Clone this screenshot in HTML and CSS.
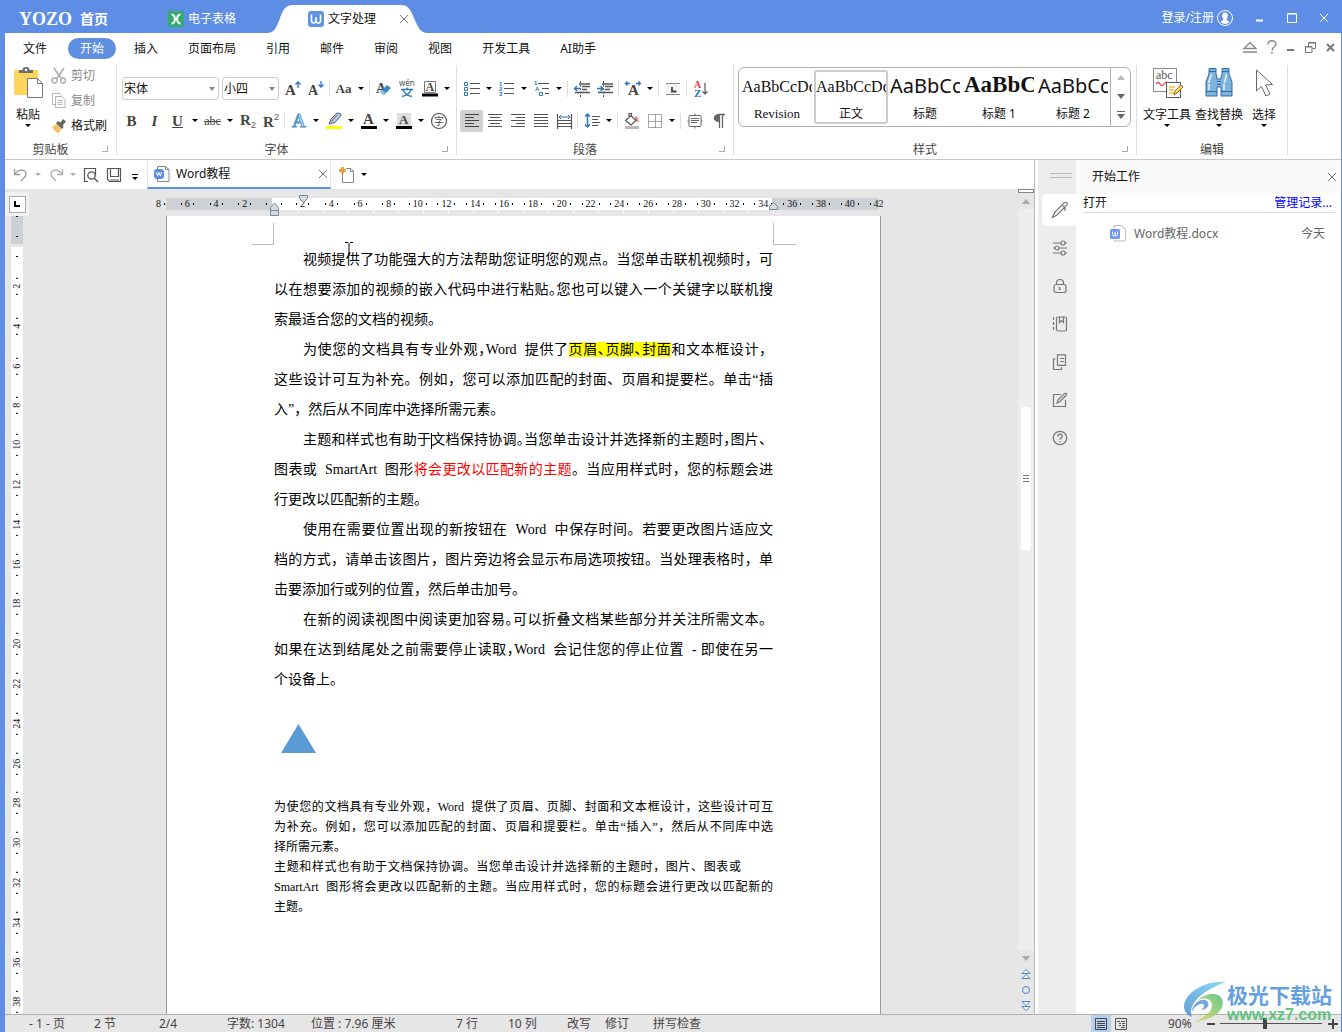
FILE: index.html
```html
<!DOCTYPE html>
<html lang="zh-CN">
<head>
<meta charset="utf-8">
<title>Word教程 - 文字处理</title>
<link rel="stylesheet" href="styles.css">
</head>
<body>
<header class="titlebar">
  <button class="home"><span class="brand">YOZO</span><span>首页</span></button>
  <button class="app-tab">
    <svg width="16" height="16"><rect width="16" height="16" rx="2" fill="#33ab6b"/><path d="M3.500 3.500C8 4 8 12 3.500 12.500M12.500 3.500C8 4 8 12 12.500 12.500M6.500 8h3" fill="none" stroke="#fff" stroke-width="2"/></svg>
    <span>电子表格</span>
  </button>
  <div class="app-tab current">
    <svg class="tab-shape" width="161" height="28" viewBox="0 0 161 28"><path d="M0 28C7 28 9 23 12 16C15 7 17 0 26 0H134C142 0 144 6 147 13C151 22 153 28 161 28Z" fill="#fff"/></svg>
    <svg width="16" height="16"><rect width="16" height="16" rx="3" fill="#5e93e3"/><path d="M3.500 3.500v6q0 2.500 2.200 2.500T8 9.500V6v3.500q0 2.500 2.300 2.500t2.200-2.500v-6" fill="none" stroke="#fff" stroke-width="1.600"/></svg>
    <span>文字处理</span>
    <button class="tab-close" aria-label="关闭"><svg width="10" height="10"><path d="M1 1l8 8M9 1l-8 8" stroke="#777"/></svg></button>
  </div>
  <div class="window-tools">
    <button class="login"><span>登录/注册</span><svg width="16" height="16"><circle cx="8" cy="8" r="7.500" fill="none" stroke="#fff"/><path d="M8 2.500c-2 0-3 1.500-2.800 3.500.1 1.500.8 2.300 1.300 3-.2 1.500-2 2-3 2.800C4.500 13.500 6.500 14 8 14s3.500-.5 4.500-2.200c-1-.8-2.800-1.300-3-2.800.5-.7 1.200-1.500 1.300-3C11 4 10 2.500 8 2.500z" fill="#fff"/></svg></button>
    <button aria-label="最小化"><svg width="10" height="10"><path d="M1 7.500h7" stroke="#fff" stroke-width="2"/></svg></button>
    <button aria-label="最大化"><svg width="10" height="10"><path d="M.5 .5h9v9h-9zM0 1h10" fill="none" stroke="#fff"/></svg></button>
    <button aria-label="关闭窗口"><svg width="10" height="10"><path d="M1 1l8 8M9 1l-8 8" stroke="#fff"/></svg></button>
  </div>
</header>

<div class="frame">
<nav class="menu">
  <button class="file">文件</button><button class="on">开始</button><button>插入</button><button>页面布局</button><button>引用</button><button>邮件</button><button>审阅</button><button>视图</button><button>开发工具</button><button>AI助手</button>
  <div class="menu-tools">
    <button aria-label="收起功能区"><svg width="14" height="12"><path d="M1 7.500L7 1.500l6 6z M0 11h14" fill="none" stroke="#888" stroke-width="1.300"/></svg></button>
    <button aria-label="帮助"><svg width="10" height="14"><path d="M1 4.500C1 -.5 9 -.5 9 4c0 3-4 3-4 6.500" fill="none" stroke="#888" stroke-width="1.400"/><path d="M4.200 12h1.600v1.600H4.200z" fill="#888"/></svg></button>
    <button aria-label="最小化文档"><svg width="8" height="10"><path d="M0 8h7" stroke="#777" stroke-width="2"/></svg></button>
    <button aria-label="还原文档"><svg width="11" height="11"><path d="M3.500 4V.5h7v6H7.500M.5 4.500h6.500v6H.5zM3 1h8M0 5h7" fill="none" stroke="#777"/></svg></button>
    <button aria-label="关闭文档"><svg width="9" height="9"><path d="M1 1l7 7M8 1l-7 7" stroke="#777" stroke-width="2"/></svg></button>
  </div>
</nav>

<div class="ribbon">
  <section class="group clipboard">
    <div class="group-body">
      <button class="big"><svg width="30" height="32"><rect x="1" y="3" width="24" height="25" rx="1" fill="#ffd65c"/><path d="M6 6V3h3.500a3.500 3 0 0 1 7 0H20v3z" fill="#6d6d6d"/><circle cx="13" cy="3" r="1.200" fill="#fff"/><path d="M14.500 11.500h10l5 5v14h-15z" fill="#fff" stroke="#777"/><path d="M24.500 11.500v5h5" fill="none" stroke="#777"/></svg><span>粘贴</span><i class="caret"></i></button>
      <div class="stack">
        <button class="off"><svg width="16" height="16"><path d="M3 0l7.500 11M13 0L5.500 11" stroke="#aaa" stroke-width="1.500" fill="none"/><circle cx="3.500" cy="12.500" r="2.500" fill="none" stroke="#aaa" stroke-width="1.300"/><circle cx="12" cy="12.500" r="2.500" fill="none" stroke="#aaa" stroke-width="1.300"/></svg>剪切</button>
        <button class="off"><svg width="16" height="16"><path d="M4 11.500H1.500v-11H9l2 2M4.500 3.500H11l3 3v8H4.500zM6.500 7.500h5M6.500 9.500h5M6.500 11.500h5" fill="none" stroke="#b5b5b5"/></svg>复制</button>
        <button><svg width="16" height="16"><path d="M1 9l5-3.500L10.500 10 8 15.500Q3 13 1 9z" fill="#f3c36b"/><path d="M5 5l2-2 2.500 1.500L12 1l3 2.500L12 7l.5 2L11 11z" fill="#666"/></svg>格式刷</button>
      </div>
    </div>
    <footer><span>剪贴板</span><button class="launch" aria-label="剪贴板选项"></button></footer>
  </section>

  <section class="group font">
    <div class="group-body rows">
      <div class="row">
        <label class="pick family"><select aria-label="字体"><option>宋体</option></select></label>
        <label class="pick size"><select aria-label="字号"><option>小四</option></select></label>
        <button class="ic" aria-label="增大字号"><svg width="18" height="18"><text x="1" y="15" class="gl b" font-size="15">A</text><path d="M14 8V2M11.500 4.500L14 2l2.500 2.500" fill="none" stroke="#2f76b5" stroke-width="1.300"/></svg></button>
        <button class="ic" aria-label="减小字号"><svg width="18" height="18"><text x="1" y="15" class="gl b" font-size="14">A</text><path d="M14 1v6M11.500 4.500L14 7l2.500-2.500" fill="none" stroke="#2f76b5" stroke-width="1.300"/></svg></button>
        <i class="sep"></i>
        <button class="ic serif aa" aria-label="更改大小写">Aa</button><button class="dd" aria-label="大小写选项"><i class="caret"></i></button>
        <i class="sep"></i>
        <button class="ic" aria-label="清除格式"><svg width="18" height="18"><text x="1" y="13" class="gl b" font-size="14">A</text><path d="M5 12l7-7 4 3-7 7z" fill="#3c85c4"/><path d="M5 12l2-2 4 3-2 2z" fill="#8fc0e6"/></svg></button>
        <button class="ic" aria-label="拼音指南"><svg width="18" height="18"><text x="1" y="6" font-size="8" fill="#555" font-family="Noto Sans">wén</text><path d="M3 9.500h12M9 7.500v2M5 10q3 6 9 6.500M13 10q-2 5-9 6.500" fill="none" stroke="#2f76b5" stroke-width="1.300"/></svg></button>
        <button class="ic" aria-label="字符边框"><svg width="18" height="18"><path d="M3.500 1.500h11v11h-11z" fill="none" stroke="#777"/><text x="4.500" y="11" class="gl b" font-size="12">A</text><path d="M1 13.500h16v3H1z" fill="#000"/></svg></button><button class="dd" aria-label="边框选项"><i class="caret"></i></button>
      </div>
      <div class="row second">
        <button class="ic serif bold" aria-label="加粗">B</button>
        <button class="ic serif bold it" aria-label="倾斜">I</button>
        <button class="ic serif bold un" aria-label="下划线">U</button><button class="dd" aria-label="下划线选项"><i class="caret"></i></button>
        <button class="ic serif st" aria-label="删除线">abc</button><button class="dd" aria-label="删除线选项"><i class="caret"></i></button>
        <button class="ic" aria-label="下标"><svg width="18" height="18"><text x="1" y="13" class="gl b" font-size="15">R</text><text x="12" y="16" fill="#555" font-size="9" font-family="Liberation Sans">2</text></svg></button>
        <button class="ic" aria-label="上标"><svg width="18" height="18"><text x="1" y="15" class="gl b" font-size="15">R</text><text x="12" y="8" fill="#555" font-size="9" font-family="Liberation Sans">2</text></svg></button>
        <i class="sep"></i>
        <button class="ic" aria-label="文字效果"><svg width="18" height="18"><text x="2" y="15" font-size="19" font-family="Liberation Serif" fill="#fff" stroke="#4a93cc">A</text></svg></button><button class="dd" aria-label="效果选项"><i class="caret"></i></button>
        <button class="ic" aria-label="突出显示"><svg width="18" height="18"><path d="M4 12l2-5 6-6 3.500.5.5 2-6 7z" fill="#a9cbe8" stroke="#55687a"/><path d="M6 10l6-7" stroke="#c25b4e"/><path d="M1 14h16v3H1z" fill="#ff0"/></svg></button><button class="dd" aria-label="突出显示选项"><i class="caret"></i></button>
        <button class="ic" aria-label="字体颜色"><svg width="18" height="18"><text x="3" y="12" class="gl b" font-size="15">A</text><path d="M1 14h16v3H1z"/></svg></button><button class="dd" aria-label="颜色选项"><i class="caret"></i></button>
        <button class="ic" aria-label="字符底纹"><svg width="18" height="18"><path d="M2 1h14v13H2z" fill="#dedede"/><text x="4" y="12" class="gl b" font-size="13">A</text><path d="M1 14h16v3H1z"/></svg></button><button class="dd" aria-label="底纹选项"><i class="caret"></i></button>
        <button class="ic" aria-label="带圈字符"><svg width="18" height="18"><circle cx="9" cy="9" r="7.500" fill="none" stroke="#555" stroke-width="1.200"/><text x="4" y="13" font-size="10" fill="#444" font-family="Noto Sans CJK SC">字</text></svg></button>
      </div>
    </div>
    <footer><span>字体</span><button class="launch" aria-label="字体选项"></button></footer>
  </section>

  <section class="group para">
    <div class="group-body rows">
      <div class="row">
        <button class="ic" aria-label="项目符号"><svg width="18" height="18"><path d="M1.500 2.500h3v3h-3zM1.500 7.500h3v3h-3zM1.500 12.500h3v3h-3z" fill="none" stroke="#2f76b5"/><path d="M7 3.500h10M7 8.500h10M7 13.500h10" stroke="#555"/></svg></button><button class="dd" aria-label="项目符号选项"><i class="caret"></i></button>
        <button class="ic" aria-label="编号"><svg width="18" height="18"><text x="1" y="6" class="num">1</text><text x="1" y="11" class="num">2</text><text x="1" y="16" class="num">3</text><path d="M6 3.500h10M6 8.500h10M6 13.500h10" stroke="#555"/></svg></button><button class="dd" aria-label="编号选项"><i class="caret"></i></button>
        <button class="ic" aria-label="多级列表"><svg width="18" height="18"><text x="1" y="5" class="num">1</text><text x="2" y="11" class="num">A</text><path d="M6.500 12.500h3v3h-3z" fill="none" stroke="#2f76b5"/><path d="M5 3.500h11M9 8.500h7M12 13.500h4" stroke="#555"/></svg></button><button class="dd" aria-label="多级列表选项"><i class="caret"></i></button>
        <i class="sep"></i>
        <button class="ic" aria-label="减少缩进"><svg width="18" height="18"><path d="M6 4h11M9 6.500h8M9 9.500h5M2 12.500h15" stroke="#555" stroke-width="1.500"/><path d="M7.500 1v16" stroke="#555" stroke-dasharray="2 1.500"/><path d="M8 8.500H2M4 6L1.500 8.500 4 11" fill="none" stroke="#2f76b5" stroke-width="1.400"/></svg></button>
        <button class="ic" aria-label="增加缩进"><svg width="18" height="18"><path d="M6 4h11M9 6.500h8M9 9.500h5M2 12.500h15" stroke="#555" stroke-width="1.500"/><path d="M7.500 1v16" stroke="#555" stroke-dasharray="2 1.500"/><path d="M1 8.500h6M4.500 6L7 8.500 4.500 11" fill="none" stroke="#2f76b5" stroke-width="1.400"/></svg></button>
        <i class="sep"></i>
        <button class="ic" aria-label="中文版式"><svg width="18" height="18"><text x="4" y="15" class="gl b" font-size="15">A</text><path d="M6 3.500H1.500M3.500 1.500l-2 2 2 2M12 3.500h4.500M14.500 1.500l2 2-2 2" fill="none" stroke="#2f76b5" stroke-width="1.300"/></svg></button><button class="dd" aria-label="版式选项"><i class="caret"></i></button>
        <i class="sep"></i>
        <button class="ic" aria-label="制表位"><svg width="18" height="18"><path d="M2 3h14v11H2z" fill="#f4f4f4"/><path d="M2 3.500h14M2 14.500h14" stroke="#888"/><path d="M8 7v4.500h4.500" fill="none" stroke="#444" stroke-width="1.800"/></svg></button>
        <i class="sep"></i>
        <button class="ic" aria-label="排序"><svg width="18" height="18"><text x="2" y="8" font-size="10" font-weight="bold" fill="#e23b3b" font-family="Liberation Serif">A</text><text x="2" y="17" font-size="11" font-weight="bold" fill="#2f76b5" font-family="Liberation Serif">Z</text><path d="M13 3v11M10.500 11.500L13 14l2.500-2.500" fill="none" stroke="#555" stroke-width="1.200"/></svg></button>
      </div>
      <div class="row second">
        <button class="ic sel" aria-label="左对齐"><svg width="18" height="18"><path d="M2 2.500h14M2 5.500h9M2 8.500h14M2 11.500h9M2 14.500h14" stroke="#444"/></svg></button>
        <button class="ic" aria-label="居中"><svg width="18" height="18"><path d="M2 2.500h14M4 5.500h10M2 8.500h14M4 11.500h10M2 14.500h14" stroke="#555"/></svg></button>
        <button class="ic" aria-label="右对齐"><svg width="18" height="18"><path d="M2 2.500h14M7 5.500h9M2 8.500h14M7 11.500h9M2 14.500h14" stroke="#555"/></svg></button>
        <button class="ic" aria-label="两端对齐"><svg width="18" height="18"><path d="M2 2.500h14M2 5.500h14M2 8.500h14M2 11.500h14M2 14.500h14" stroke="#555"/></svg></button>
        <button class="ic" aria-label="分散对齐"><svg width="18" height="18"><path d="M2.500 2v15M16.500 2v15M2 8.500h15M2 11.500h15M2 14.500h15" stroke="#555" stroke-width="1.200"/><path d="M4 5h11M6 3L4 5l2 2M13 3l2 2-2 2" fill="none" stroke="#2f76b5"/></svg></button>
        <i class="sep"></i>
        <button class="ic" aria-label="行距"><svg width="18" height="18"><path d="M4.500 2v13M2 4.500L4.500 2 7 4.500M2 12.500L4.500 15 7 12.500" fill="none" stroke="#2f76b5" stroke-width="1.500"/><path d="M9 4.500h8M9 7.500h6M9 10.500h8M9 13.500h6" stroke="#555"/></svg></button><button class="dd" aria-label="行距选项"><i class="caret"></i></button>
        <i class="sep"></i>
        <button class="ic" aria-label="底纹"><svg width="18" height="18"><path d="M2 14h14v3H2z" fill="#bbb"/><path d="M12 4q4 0 3.500 7-2-2-3.500-3z" fill="#ee8d88"/><path d="M2.500 8.500L8 3.500l5 5-5 4.500zM6 6V1.500h2.500V5" fill="#fff" stroke="#555" stroke-width="1.200"/></svg></button>
        <button class="ic" aria-label="框线"><svg width="18" height="18"><path d="M2.500 2.500h13v13h-13zM9.500 2.500v13M2.500 9.500h13" fill="none" stroke="#555" stroke-dasharray="1 1"/></svg></button><button class="dd" aria-label="框线选项"><i class="caret"></i></button>
        <i class="sep"></i>
        <button class="ic" aria-label="文本框"><svg width="18" height="18"><rect x="3" y="3.500" width="12" height="11" rx="1" fill="none" stroke="#666"/><path d="M5 6.500h8M5 8.500h8M5 10.500h6M9 1.500v2M9 14.500v2M1.500 9H3M15 9h1.500" stroke="#666"/></svg></button>
        <button class="ic" aria-label="显示标记"><svg width="18" height="18"><path d="M9 2.500h7M10.500 3v13M13.500 3v13" stroke="#666" stroke-width="1.300"/><path d="M10 2v8C3 10 3 2 10 2z" fill="#666"/></svg></button>
      </div>
    </div>
    <footer><span>段落</span><button class="launch" aria-label="段落选项"></button></footer>
  </section>

  <section class="group styles">
    <div class="group-body">
      <div class="gallery">
        <button><b class="s-text">AaBbCcDd</b><span class="latin">Revision</span></button>
        <button class="picked"><b class="s-text">AaBbCcDd</b><span>正文</span></button>
        <button><b class="s-sans">AaBbCc</b><span>标题</span></button>
        <button><b class="s-head">AaBbC</b><span>标题 1</span></button>
        <button><b class="s-sans">AaBbCc</b><span>标题 2</span></button>
        <div class="gallery-nav"><button class="up" aria-label="上一行"></button><button class="down" aria-label="下一行"></button><button class="all" aria-label="更多样式"></button></div>
      </div>
    </div>
    <footer><span>样式</span><button class="launch" aria-label="样式选项"></button></footer>
  </section>

  <section class="group edit">
    <div class="group-body">
      <button class="big"><svg width="30" height="32"><path d="M1.500 1.500h23v23h-23z" fill="#fff" stroke="#888"/><text x="4" y="12" font-size="12" fill="#555" font-family="Liberation Serif">abc</text><path d="M4 17q2-3 4 0t4 0 3-1" fill="none" stroke="#e23b3b" stroke-width="1.300"/><path d="M14.500 15.500h14v15h-14z" fill="#fff" stroke="#555"/><path d="M17 20h6M17 23h5M17 26h6" stroke="#f2c230" stroke-width="1.500"/><path d="M22 28l1-4 6-6 2 2-6 6z" fill="#ffd65c" stroke="#a06a2c"/></svg><span>文字工具</span><i class="caret"></i></button>
      <button class="big"><svg width="30" height="32"><path d="M5 1.500h7V7l1 3v2h4v-2l1-3V1.500h7V7l3 8v14H17v-9h-4v9H2V15l3-8z" fill="#7fb3dc" stroke="#2f6da5"/><path d="M5 4.500h7M18 4.500h7M13 14.500h4M13 17.500h4M2 24.500h11M17 24.500h11" stroke="#2f6da5"/><path d="M7.500 7l-3 9M22.500 7l-2 9M5 17v6M20 17v6" stroke="#e4f2fc" stroke-width="1.500"/></svg><span>查找替换</span><i class="caret"></i></button>
      <button class="big small"><svg width="30" height="32"><path d="M7.500 3v21l5-4.500 4.500 9.500 4-2-4.500-9 7-.5z" fill="#fff" stroke="#666"/></svg><span>选择</span><i class="caret"></i></button>
    </div>
    <footer><span>编辑</span></footer>
  </section>
</div>

<div class="work">
  <main class="editor">
    <div class="docbar">
      <button class="q" aria-label="撤销"><svg width="16" height="16"><path d="M1.500 2v5.500H7M2 7C5 2 13 1.500 13 7c0 3-3 4.500-5 7" fill="none" stroke="#999" stroke-width="1.300"/></svg></button><button class="q-dd" aria-label="撤销列表"><i class="caret dim"></i></button>
      <button class="q" aria-label="恢复"><svg width="16" height="16"><path d="M14.500 2v5.500H9M14 7C11 2 3 1.500 3 7c0 3 3 4.500 5 7" fill="none" stroke="#aaa" stroke-width="1.300"/></svg></button><button class="q-dd" aria-label="恢复列表"><i class="caret dim"></i></button>
      <button class="q" aria-label="打印预览"><svg width="16" height="16"><path d="M5 14.500H1.500v-13h11V8" fill="none" stroke="#555" stroke-width="1.200"/><circle cx="8.500" cy="8.500" r="3.700" fill="none" stroke="#555" stroke-width="1.300"/><path d="M11 11l4 4" stroke="#555" stroke-width="1.500"/></svg></button>
      <button class="q" aria-label="保存"><svg width="16" height="16"><path d="M1.500 1.500h13v13h-11l-2-2zM4.500 1.500v8h8v-8M4 13h9" fill="none" stroke="#555" stroke-width="1.200"/></svg></button>
      <button class="q-more" aria-label="更多命令"><i class="bar"></i><i class="caret"></i></button>
      <div class="doctab"><svg width="16" height="16"><path d="M3.500 3V.5h8l3.500 3v12H3.500V13M11.500.5v3H15" fill="none" stroke="#888"/><rect y="3" width="10" height="10" rx="3" fill="#5e8de5"/><path d="M2.500 6l1 4L5 6.500 6.500 10l1-4" fill="none" stroke="#fff"/></svg><span>Word教程</span><button class="doc-close" aria-label="关闭文档标签"><svg width="10" height="10"><path d="M1 1l8 8M9 1l-8 8" stroke="#777"/></svg></button></div>
      <button class="q" aria-label="新建文档"><svg width="16" height="16"><path d="M3.500 6v9.500h11V4l-2.500-2.500H7M11.500 1.500v3H15" fill="none" stroke="#888"/><path d="M3.500 0v7M0 3.500h7" stroke="#f09a26" stroke-width="2.500"/></svg></button><button class="q-dd" aria-label="新建选项"><i class="caret"></i></button>
    </div>
    <div class="canvas">
      <div class="side">
        <button class="corner" aria-label="左对齐制表符"><i></i></button>
        <div class="vruler"><div class="v-margin"><i></i><i></i></div><div class="v-body"><i class="v0"></i><div class="v-cells"><span>2</span><span>4</span><span>6</span><span>8</span><span>10</span><span>12</span><span>14</span><span>16</span><span>18</span><span>20</span><span>22</span><span>24</span><span>26</span><span>28</span><span>30</span><span>32</span><span>34</span><span>36</span><span>38</span></div></div></div>
      </div>
      <div class="pagearea">
        <div class="hruler">
          <div class="h-cells"><span>8</span><span>6</span><span>4</span><span>2</span><span class="zero"></span><span>2</span><span>4</span><span>6</span><span>8</span><span>10</span><span>12</span><span>14</span><span>16</span><span>18</span><span>20</span><span>22</span><span>24</span><span>26</span><span>28</span><span>30</span><span>32</span><span>34</span><span>36</span><span>38</span><span>40</span><span>42</span></div>
          <div class="ticks"></div>
          <svg class="mark first" width="9" height="8"><path d="M.5.5h8v3L4.500 7.500.5 3.500z" fill="#d3dae2" stroke="#7d8790"/></svg>
          <svg class="mark left" width="9" height="14"><path d="M.5 13.500v-8L4.500 1l4 4.500v8zM0 8.500h9" fill="#d3dae2" stroke="#7d8790"/></svg>
          <svg class="mark right" width="9" height="8"><path d="M.5 7.500v-3L4.500.5l4 4v3z" fill="#d3dae2" stroke="#7d8790"/></svg>
        </div>
        <article class="sheet">
          <div class="crops"><i class="crop-l"></i><i class="crop-r"></i></div>
          <div class="copy">
            <p><span class="ln ind">视频提供了功能强大的方法帮助您证明您的观点。当您单击联机视频时，可</span><span class="ln">以在想要添加的视频的嵌入代码中进行粘贴<span class="half">。</span>您也可以键入一个关键字以联机搜</span><span class="ln end">索最适合您的文档的视频。</span></p>
            <p><span class="ln ind">为使您的文档具有专业外观<span class="half">，</span>Word&nbsp; 提供了<mark>页眉<span class="half">、</span>页脚<span class="half">、</span>封面</mark>和文本框设计，</span><span class="ln">这些设计可互为补充。例如，您可以添加匹配的封面、页眉和提要栏。单击“插</span><span class="ln end">入”，然后从不同库中选择所需元素。</span></p>
            <p><span class="ln ind">主题和样式也有助于<i class="cursor"></i>文档保持协调<span class="half">。</span>当您单击设计并选择新的主题时<span class="half">，</span>图片、</span><span class="ln">图表或&nbsp; SmartArt&nbsp; 图形<em>将会更改以匹配新的主题</em>。当应用样式时，您的标题会进</span><span class="ln end">行更改以匹配新的主题。</span></p>
            <p><span class="ln ind">使用在需要位置出现的新按钮在&nbsp; Word&nbsp; 中保存时间。若要更改图片适应文</span><span class="ln">档的方式，请单击该图片，图片旁边将会显示布局选项按钮。当处理表格时，单</span><span class="ln end">击要添加行或列的位置，然后单击加号。</span></p>
            <p><span class="ln ind">在新的阅读视图中阅读更加容易<span class="half">。</span>可以折叠文档某些部分并关注所需文本。</span><span class="ln">如果在达到结尾处之前需要停止读取<span class="half">，</span>Word&nbsp; 会记住您的停止位置&nbsp; - 即使在另一</span><span class="ln end">个设备上。</span></p>
          </div>
          <svg class="triangle" width="35" height="29"><path d="M17.500 0L35 29H0z" fill="#5b9bd5"/></svg>
          <div class="copy note">
            <p><span class="ln">为使您的文档具有专业外观，Word&nbsp; 提供了页眉、页脚、封面和文本框设计，这些设计可互</span><span class="ln">为补充。例如，您可以添加匹配的封面、页眉和提要栏。单击“插入”，然后从不同库中选</span><span class="ln end">择所需元素。</span></p>
            <p><span class="ln short">主题和样式也有助于文档保持协调。当您单击设计并选择新的主题时，图片、图表或</span><span class="ln">SmartArt&nbsp; 图形将会更改以匹配新的主题。当应用样式时，您的标题会进行更改以匹配新的</span><span class="ln end">主题。</span></p>
          </div>
          <svg class="pointer" width="8" height="18"><path d="M0 .5h3M5 .5h3M4 1v13M3 12h2" stroke="#000" fill="none"/></svg>
        </article>
      </div>
      <div class="scroll">
        <i class="split"></i>
        <button class="s-up" aria-label="向上滚动"></button>
        <div class="track"><div class="thumb"><i></i><i></i><i></i></div></div>
        <button class="s-down" aria-label="向下滚动"></button>
        <button aria-label="上一页"><svg width="10" height="12"><path d="M1 5.500L5 1.500l4 4zM1 10.500L5 6.500l4 4z" fill="#fff" stroke="#4a86c8"/></svg></button>
        <button aria-label="浏览对象"><svg width="10" height="12"><circle cx="5" cy="6" r="3.500" fill="none" stroke="#4a86c8"/></svg></button>
        <button aria-label="下一页"><svg width="10" height="12"><path d="M1 1.500h8L5 5.500zM1 6.500h8L5 10.500z" fill="#fff" stroke="#4a86c8"/></svg></button>
      </div>
    </div>
  </main>

  <aside class="strip">
    <i class="grip"></i>
    <button class="on" aria-label="开始工作"><svg width="18" height="18"><path d="M1.500 16.500l2-5L13 2q2-1.500 3 0 1 1-.5 2.500L6 14zM11 4l3 3v3" fill="none" stroke="#777" stroke-width="1.200"/></svg></button>
    <button aria-label="属性"><svg width="16" height="16"><path d="M1 3h8M13 3h2M1 8h2M7 8h8M1 13h8M13 13h2" stroke="#777" stroke-width="1.200"/><g fill="none" stroke="#777" stroke-width="1.200"><circle cx="11" cy="3" r="2"/><circle cx="5" cy="8" r="2"/><circle cx="11" cy="13" r="2"/></g></svg></button>
    <button aria-label="保护"><svg width="16" height="16"><rect x="2" y="6.500" width="12" height="8" rx="2" fill="none" stroke="#777" stroke-width="1.200"/><path d="M4.500 6.500V5q0-3.500 3.500-3.500T11.500 5v1.500M7.500 9v2.500H9" fill="none" stroke="#777" stroke-width="1.200"/></svg></button>
    <button aria-label="书签"><svg width="16" height="16"><rect x="4.500" y="1" width="10" height="14" rx="1.500" fill="none" stroke="#777" stroke-width="1.200"/><path d="M7.500 1v5.500l2-2 2 2V1" fill="none" stroke="#777" stroke-width="1.200"/><path d="M1.500 1v14" stroke="#777" stroke-width="1.200" stroke-dasharray="3 2"/></svg></button>
    <button aria-label="剪贴板"><svg width="16" height="16"><path d="M3.500 5H1.500v10.500h8V13M5.500.8h8v10.500h-8zM8 4.500h4M8 7.500h4" fill="none" stroke="#777" stroke-width="1.200"/></svg></button>
    <button aria-label="修订"><svg width="16" height="16"><path d="M9 2.500H1.500v12h12V8M5 11l1-3 6.500-6.500q1.500-.7 2 .5 0 1-.5 1.500L7.500 10z" fill="none" stroke="#777" stroke-width="1.200"/></svg></button>
    <button aria-label="帮助中心"><svg width="16" height="16"><circle cx="8" cy="8" r="6.700" fill="none" stroke="#777" stroke-width="1.200"/><path d="M5.800 6.500c0-3 4.400-3 4.400-.3C10.200 8 8 8 8 9.800M8 11v1.300" fill="none" stroke="#777" stroke-width="1.200"/></svg></button>
  </aside>

  <aside class="panel">
    <header><h2>开始工作</h2><button aria-label="关闭面板"><svg width="10" height="10"><path d="M1 1l8 8M9 1l-8 8" stroke="#777"/></svg></button></header>
    <div class="recent-head"><span>打开</span><a href="#records">管理记录...</a></div>
    <div class="recent"><svg width="16" height="17"><path d="M4 4V1q0-.5.500-.5h7l4 4v11q0 .5-.5.500H4.500Q4 16 4 15" fill="none" stroke="#bbb"/><rect y="4" width="10" height="10" rx="1.500" fill="#7296fb"/><path d="M2.500 6.500v3q0 1.500 1.200 1.500T5 9.500v-2 2q0 1.500 1.200 1.500t1.300-1.500v-3" fill="none" stroke="#fff"/></svg><span>Word教程.docx</span><time>今天</time></div>
  </aside>
</div>

<footer class="status">
  <div class="facts"><span>- 1 - 页</span><span>2 节</span><span>2/4</span><span>字数: 1304</span><span>位置 : 7.96 厘米</span><span>7 行</span><span>10 列</span><span>改写</span><span>修订</span><span>拼写检查</span></div>
  <div class="view">
    <button class="on" aria-label="页面视图"><svg width="12" height="12"><path d="M.5.5h11v11H.5zM2 3.500h8M2 5.500h8M2 7.500h8M2 9.500h8" fill="none" stroke="#444"/></svg></button>
    <button aria-label="大纲视图"><svg width="12" height="12"><path d="M.5.5h11v11H.5zM2 3.500h3M6 3.500h4M4 5.500h2M7 5.500h3M4 7.500h2M7 7.500h3M6 9.500h4" fill="none" stroke="#555"/></svg></button>
    <output>90%</output>
    <button class="zoom-out" aria-label="缩小"><svg width="10" height="10"><path d="M1 5h8" stroke="#444" stroke-width="2"/></svg></button>
    <input type="range" min="10" max="200" value="94" aria-label="显示比例">
    <button class="zoom-in" aria-label="放大"><svg width="10" height="10"><path d="M0 5h10M5 0v10" stroke="#444" stroke-width="2"/></svg></button>
  </div>
</footer>
</div>

<div class="site-badge">
  <svg width="44" height="42" viewBox="0 0 44 42"><defs><linearGradient id="sky" x1="0" y1="1" x2="1" y2="0"><stop offset="0" stop-color="#4c8ed0"/><stop offset="1" stop-color="#78d4f5"/></linearGradient><linearGradient id="leaf" x1="0" y1="1" x2="1" y2="0"><stop offset="0" stop-color="#e2d957"/><stop offset="1" stop-color="#4fbf7b"/></linearGradient></defs><path d="M43 1C22-1 2 12 1 25c0 5 3 9 8 11-4-10 4-24 34-35z" fill="url(#sky)"/><path d="M14 20c8-9 22-9 25-2 4 10-6 20-28 23 12-5 19-12 18-18-2-6-9-7-15-3z" fill="url(#leaf)"/><path d="M9 31c0-8 9-15 15-11 4 4-1 9-6 9 3-2 4-5 2-6-4-1-9 3-11 8z" fill="#5a98d6"/></svg>
  <div><strong>极光下载站</strong><span>www.xz7.com</span></div>
</div>
</body>
</html>
```
FILE: styles.css
```css
* { box-sizing: border-box; }
html, body { height: 100%; }
body {
  margin: 0;
  display: flex;
  flex-direction: column;
  font: 12px/16px "Noto Sans", "Noto Sans CJK SC", sans-serif;
  color: #111;
  background: #fff;
  overflow: hidden;
}
button {
  border: 0;
  padding: 0;
  background: none;
  font: inherit;
  color: inherit;
  display: flex;
  align-items: center;
  justify-content: center;
  white-space: nowrap;
  flex: none;
}
svg { display: block; flex: none; overflow: visible; }
i { font-style: normal; display: block; }
.gl { font-family: "Liberation Serif", serif; fill: #444; }
.b { font-weight: bold; }
.num { font: bold 6px "Liberation Sans", sans-serif; fill: #2f76b5; }

/* title bar */
.titlebar {
  height: 33px;
  flex: none;
  display: flex;
  align-items: flex-end;
  background: #5e8de5;
  color: #fff;
  padding-left: 19px;
}
.titlebar > * { height: 28px; }
.home { gap: 8px; font-size: 14px; font-weight: bold; width: 89px; justify-content: flex-start; }
.brand { font: bold 18px/20px "Liberation Serif", serif; }
.app-tab { display: flex; align-items: center; gap: 4px; margin-left: 60px; }
.app-tab.current { position: relative; margin-left: 31px; width: 161px; padding-left: 41px; color: #111; }
.tab-shape { position: absolute; left: 0; top: 0; z-index: -1; }
.app-tab.current { z-index: 1; }
.tab-close { margin-left: 19px; }
.window-tools { margin-left: auto; display: flex; align-items: center; gap: 22px; padding: 0 13px 3px 0; }
.login { gap: 3px; }

/* window frame */
.frame {
  flex: 1;
  min-height: 0;
  display: flex;
  flex-direction: column;
  border-left: 5px solid #5e8de5;
  border-right: 1px solid #5e8de5;
}
.menu { flex: none; height: 31px; display: flex; align-items: center; gap: 6px; padding-left: 6px; }
.menu > button { height: 21px; padding: 0 12px; border-radius: 11px; }
.menu > .file { margin-right: 3px; }
.menu > .on { background: #5e8fe0; color: #fff; }
.menu-tools { margin-left: auto; display: flex; align-items: center; gap: 10px; padding: 0 6px 3px 0; }

/* ribbon */
.ribbon { flex: none; height: 96px; display: flex; border-bottom: 1px solid #c8c8c8; }
.group { display: flex; flex-direction: column; border-right: 1px solid #ddd; margin: 1px 0 4px; }
.group-body { height: 77px; flex: none; display: flex; }
.group footer { display: flex; flex: none; position: relative; justify-content: center; color: #444; }
.launch { position: absolute; right: 8px; top: 4px; width: 6px; height: 6px; border: solid #aaa; border-width: 0 1px 1px 0; }
.clipboard { width: 112px; }
.clipboard footer { padding-right: 20px; }
.font { width: 340px; }
.font footer { padding-right: 20px; }
.para { width: 277px; }
.para footer { padding-right: 20px; }
.styles { width: 403px; }
.styles footer { padding-right: 20px; }
.edit { width: 151px; }
.caret { border: 3px solid transparent; border-top-color: #000; border-bottom: 0; }
.caret.dim { border-top-color: #a8b2bd; }
.big { flex-direction: column; justify-content: flex-start; padding-top: 2px; width: 52px; }
.big span { margin: 8px 0 2px; line-height: 15px; }
.big.small { width: 38px; }
.edit .group-body { padding-left: 4px; }
.clipboard .big { width: 46px; }
.stack { padding-top: 2px; }
.stack button { height: 18px; margin-bottom: 7px; gap: 4px; }
.stack .off { color: #888; }
.rows { flex-direction: column; padding-left: 3px; }
.row { display: flex; align-items: center; height: 23px; margin-top: 12px; }
.row.second { margin-top: 9px; }
.ic { width: 23px; height: 22px; border-radius: 2px; }
.ic.sel { background: #d0d0d0; }
.dd { width: 12px; height: 22px; }
.sep { width: 1px; height: 16px; margin: 0 2px; background: #ddd; }
.serif { font-family: "Liberation Serif", serif; color: #444; }
.aa { font-size: 13px; font-weight: bold; }
.bold { font-size: 15px; font-weight: bold; }
.it { font-style: italic; }
.un { text-decoration: underline; }
.st { text-decoration: line-through; font-size: 12px; }
.pick { position: relative; height: 23px; display: block; }
.pick.family { width: 97px; margin: 0 3px 0 2px; }
.pick.size { width: 57px; margin-right: 2px; }
.pick select { appearance: none; width: 100%; height: 100%; border: 1px solid #ccc; border-radius: 3px; background: #fff; font: inherit; color: #111; padding: 0 1px; }
.pick::after { content: ""; position: absolute; right: 4px; top: 10px; border: 3px solid transparent; border-top: 4px solid #888; border-bottom: 0; pointer-events: none; }
.gallery { display: flex; height: 60px; margin: 2px 5px 0 4px; flex: 1; border: 1px solid #b0b0b0; border-radius: 6px; padding-left: 1px; }
.gallery > button { width: 74px; height: 54px; margin-top: 2px; flex-direction: column; overflow: hidden; border: 2px solid transparent; border-radius: 3px; align-items: stretch; }
.gallery > .picked { border-color: #ccc; }
.gallery b { font-weight: normal; line-height: 28px; height: 28px; text-align: left; overflow: hidden; }
.gallery .s-text { font-family: "Liberation Serif", serif; font-size: 16px; line-height: 30px; }
.s-sans { font-family: "Noto Sans", sans-serif; font-size: 20px; }
.gallery .s-head { font-family: "Liberation Serif", serif; font-size: 23px; font-weight: bold; line-height: 26px; }
.gallery span { line-height: 16px; margin-top: 6px; text-align: center; }
.latin { font-family: "Liberation Serif", serif; font-size: 13px; }
.gallery-nav { flex: 1; border-left: 1px solid #b0b0b0; display: flex; flex-direction: column; justify-content: space-around; align-items: center; }
.gallery-nav button { width: 8px; height: 5px; border: 4px solid transparent; }
.gallery-nav .up { border-bottom: 5px solid #bbb; border-top: 0; }
.gallery-nav .down { border-top: 5px solid #666; border-bottom: 0; }
.gallery-nav .all { border-top: 5px solid #666; border-bottom: 0; box-shadow: 0 -2px 0 #fff, 0 -3px 0 #666; }

/* workspace */
.work { flex: 1; min-height: 0; display: flex; }
.editor { flex: 1; min-width: 0; display: flex; flex-direction: column; border-right: 1px solid #bbb; margin-right: 3px; }
.docbar { flex: none; height: 29px; display: flex; align-items: center; padding-left: 4px; }
.q { width: 23px; height: 24px; }
.q-dd { width: 12px; height: 24px; }
.q-more { width: 20px; height: 24px; flex-direction: column; gap: 2px; padding-top: 4px; }
.bar { width: 6px; height: 1px; background: #000; }
.doctab { display: flex; align-items: center; gap: 6px; width: 184px; height: 28px; border: solid #e4e4e4; border-width: 0 1px; border-bottom: 2px solid #5e8fe0; padding: 0 2px 0 6px; margin: 0 4px 0 2px; }
.doc-close { margin-left: auto; }
.canvas { flex: 1; min-height: 0; display: flex; background: #e6e6e6; }
.side { width: 24px; flex: none; display: flex; flex-direction: column; padding-top: 3px; }
.corner { width: 24px; height: 24px; background: #f2f2f2; }
.corner::before { content: ""; width: 15px; height: 15px; border: 1px solid #aaa; background: #fff; }
.corner i { position: absolute; width: 6px; height: 6px; border: solid #000; border-width: 0 0 2px 2px; }
.vruler { flex: 1; min-height: 0; width: 12px; margin-left: 6px; display: flex; flex-direction: column; overflow: hidden; }
.v-margin { height: 28px; background: #cdd1d6; margin-bottom: 3px; display: flex; flex-direction: column; align-items: center; gap: 19px; flex: none; }
.v-margin i, .v0 { width: 2px; height: 1px; background: #000; flex: none; }
.v-body { flex: 1; min-height: 0; background: #fff; display: flex; flex-direction: column; align-items: center; }
.v0 { margin: 9px 0; }
.v-cells { flex: 1; min-height: 0; display: flex; flex-direction: column; margin-bottom: -8px; }
.v-cells span { flex: 1; display: flex; align-items: center; justify-content: center; gap: 5px; writing-mode: vertical-rl; transform: rotate(180deg); font: 10px/12px "Liberation Serif", serif; }
.v-cells span::before, .v-cells span::after { content: ""; width: 2px; height: 1px; background: #000; }
.pagearea { flex: 1; min-width: 0; display: flex; flex-direction: column; align-items: center; overflow: hidden; }
.hruler { position: relative; flex: none; width: 715px; height: 27px; padding-top: 9px; }
.h-cells { height: 12px; margin: 0 -12px 0 -22px; display: grid; grid-template-columns: repeat(26, 1fr); background: linear-gradient(90deg, transparent 22px, #cdd1d6 22px 128px, #fff 128px 628px, #cdd1d6 628px 735px, transparent 735px); }
.h-cells span { display: flex; align-items: center; justify-content: center; gap: 3px; font: 10px/12px "Liberation Serif", serif; }
.h-cells span::before, .h-cells span::after { content: ""; width: 1px; height: 2px; background: #000; }
.h-cells .zero { gap: 14px; }
.h-cells span:first-child::before, .h-cells span:last-child::after { background: none; }
.ticks { height: 3px; margin: 1px 106px 0 132px; background: repeating-linear-gradient(90deg, #fff 0 1px, transparent 1px 25px); }
.mark { position: absolute; }
.mark.first { left: 133px; top: 6px; }
.mark.left { left: 104px; top: 13px; }
.mark.right { left: 603px; top: 13px; }
.sheet { position: relative; flex: 1; min-height: 0; width: 715px; background: #fff; border: solid #999; border-width: 0 1px; padding-top: 7px; }
.crops { display: flex; justify-content: space-between; margin: 0 84px 0 85px; height: 22px; }
.crops i { width: 22px; border: solid #bbb; border-width: 0 1px 1px 0; }
.crops .crop-r { width: 23px; border-width: 0 0 1px 1px; }
.copy { width: 499px; margin-left: 107px; font: 14px/30px "Liberation Serif", "Noto Sans CJK SC", serif; color: #000; }
.copy p { margin: 0; }
.ln { display: block; text-align: justify; text-align-last: justify; height: 30px; }
.ln.ind { padding-left: 29px; }
.ln.end { text-align-last: left; }
.ln.short { padding-right: 32px; }
/* punctuation set at half width */
.half { font-feature-settings: "halt"; }
mark { background: #ff0; color: inherit; }
em { font-style: normal; color: #f00; }
.cursor { display: inline-block; width: 1px; height: 16px; margin-right: -1px; background: #000; vertical-align: middle; }
.triangle { margin: 29px 0 44px 114px; }
.copy.note { font-size: 12px; line-height: 20px; }
.note .ln { height: 20px; }
.pointer { position: absolute; left: 178px; top: 26px; }
.scroll { width: 16px; flex: none; display: flex; flex-direction: column; align-items: center; }
.scroll button { height: 16px; }
.split { width: 16px; height: 4px; border: 1px solid #888; background: #fff; }
.s-up, .s-down { width: 8px; }
.s-up::before, .s-down::before { content: ""; border: 4px solid transparent; }
.s-up::before { border-bottom: 5px solid #aaa; border-top: 0; }
.s-down::before { border-top: 5px solid #aaa; border-bottom: 0; }
.track { flex: 1; width: 16px; background: #ededed; padding: 198px 3px 0; }
.thumb { height: 143px; background: #fff; border-radius: 3px; display: flex; flex-direction: column; align-items: center; justify-content: center; gap: 2px; }
.thumb i { width: 6px; height: 1px; background: #777; }

/* side strip and panel */
.strip { width: 38px; flex: none; background: #ededed; display: flex; flex-direction: column; align-items: flex-end; }
.grip { width: 22px; height: 5px; border: solid #bbb; border-width: 1px 0; margin: 13px 4px 16px 0; }
.strip button { width: 34px; height: 32px; margin-bottom: 6px; padding-left: 2px; }
.strip .on { background: #fff; border-radius: 5px 0 0 5px; }
.panel { width: 265px; flex: none; }
.panel header { height: 34px; background: #fafafa; display: flex; align-items: center; justify-content: space-between; padding: 0 4px 0 16px; }
.panel h2 { margin: 0; font: inherit; }
.recent-head { display: flex; justify-content: space-between; height: 19px; margin: 0 5px 0 7px; padding: 1px 4px 0 0; border-bottom: 1px solid #ddd; }
.recent-head a { color: #00f; text-decoration: none; }
.recent { display: flex; align-items: center; gap: 8px; margin-top: 12px; padding: 0 16px 0 34px; color: #666; }
.recent time { margin-left: auto; }

/* status bar */
.status { flex: none; height: 18px; border-top: 1px solid #b0b0b0; background: #e6e6e6; display: flex; justify-content: space-between; align-items: center; color: #444; }
.facts { display: grid; grid-template-columns: 65px 65px 68px 84px 145px 52px 59px 38px 48px auto; padding-left: 24px; white-space: nowrap; }
.view { display: flex; align-items: center; }
.view button { width: 20px; height: 17px; }
.view .on { background: #b5d0ec; }
.view output { margin-left: 37px; width: 34px; }
.view .zoom-out { width: 18px; }
.view .zoom-in { width: 16px; }
.view input { appearance: none; width: 102px; height: 16px; margin: 0 3px 0 0; background: linear-gradient(#555, #555) center / 100% 1px no-repeat; }
.view input::-webkit-slider-thumb { appearance: none; width: 4px; height: 11px; background: #444; }

/* download site badge */
.site-badge { position: absolute; right: 10px; bottom: 9px; display: flex; align-items: center; pointer-events: none; opacity: .85; }
.site-badge div { display: flex; flex-direction: column; }
.site-badge strong { font: bold 21px/26px "Noto Sans CJK SC", sans-serif; color: #4a90d9; }
.site-badge span { font: bold 16px/16px "Liberation Sans", sans-serif; color: #4dbb6e; }
```
